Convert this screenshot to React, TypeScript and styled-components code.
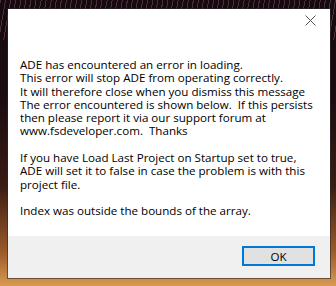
import React from "react";
import styled, { createGlobalStyle } from "styled-components";

const Global = createGlobalStyle`
  html, body { margin: 0; padding: 0; }
  body { width: 336px; height: 286px; overflow: hidden; }
`;

const Desktop = styled.div`
  width: 336px;
  height: 286px;
  box-sizing: border-box;
  padding: 9px 6px 8px 8px;
  display: flex;
  background:
    repeating-linear-gradient(100deg, rgba(190, 110, 140, 0.35) 0 1px, transparent 1px 5px) top / 100% 40px no-repeat,
    linear-gradient(180deg, #140a10 0%, #1c0c12 35%, #3a1c12 65%, #9a5a2a 88%, #d89a52 100%);
`;

const Dialog = styled.div`
  flex: 1;
  display: flex;
  flex-direction: column;
  background: #ffffff;
  box-shadow: 0 0 0 1px rgba(40, 40, 40, 0.6);
  font-family: "Open Sans", "Noto Sans", sans-serif;
`;

const Body = styled.div`
  flex: 1;
  display: flex;
  flex-direction: column;
  padding: 6px 6px 0 12px;
`;

const TitleRow = styled.div`
  flex: 0 0 43px;
  display: flex;
  justify-content: flex-end;
`;

const Close = styled.div`
  width: 28px;
  height: 24px;
  display: flex;
  align-items: flex-start;
  justify-content: center;
`;

const Message = styled.div`
  flex: 0 0 auto;
  font-size: 11.6px;
  line-height: 13.3px;
  color: #000;
  white-space: pre;
`;

const Footer = styled.div`
  flex: 0 0 42px;
  background: #f0f0f0;
  display: flex;
  align-items: flex-start;
  justify-content: flex-end;
  padding: 10px 15px 0 0;
  box-sizing: border-box;
`;

const Button = styled.button`
  width: 73px;
  height: 20px;
  box-sizing: border-box;
  border: 2px solid #0078d7;
  background: #e1e1e1;
  font-family: "Open Sans", "Noto Sans", sans-serif;
  font-size: 11.6px;
  color: #000;
  padding: 0;
  display: flex;
  align-items: center;
  justify-content: center;
`;

const text = `ADE has encountered an error in loading.
This error will stop ADE from operating correctly.
It will therefore close when you dismiss this message
The error encountered is shown below.  If this persists
then please report it via our support forum at
www.fsdeveloper.com.  Thanks

If you have Load Last Project on Startup set to true,
ADE will set it to false in case the problem is with this
project file.

Index was outside the bounds of the array.`;

export default function App() {
  return (
    <>
      <Global />
      <Desktop>
        <Dialog>
          <Body>
            <TitleRow>
              <Close>
                <svg width="11" height="11" viewBox="0 0 11 11">
                  <path d="M0.5 0.5 L10.5 10.5 M10.5 0.5 L0.5 10.5" stroke="#555" strokeWidth="1" fill="none" />
                </svg>
              </Close>
            </TitleRow>
            <Message>{text}</Message>
          </Body>
          <Footer>
            <Button>OK</Button>
          </Footer>
        </Dialog>
      </Desktop>
    </>
  );
}
